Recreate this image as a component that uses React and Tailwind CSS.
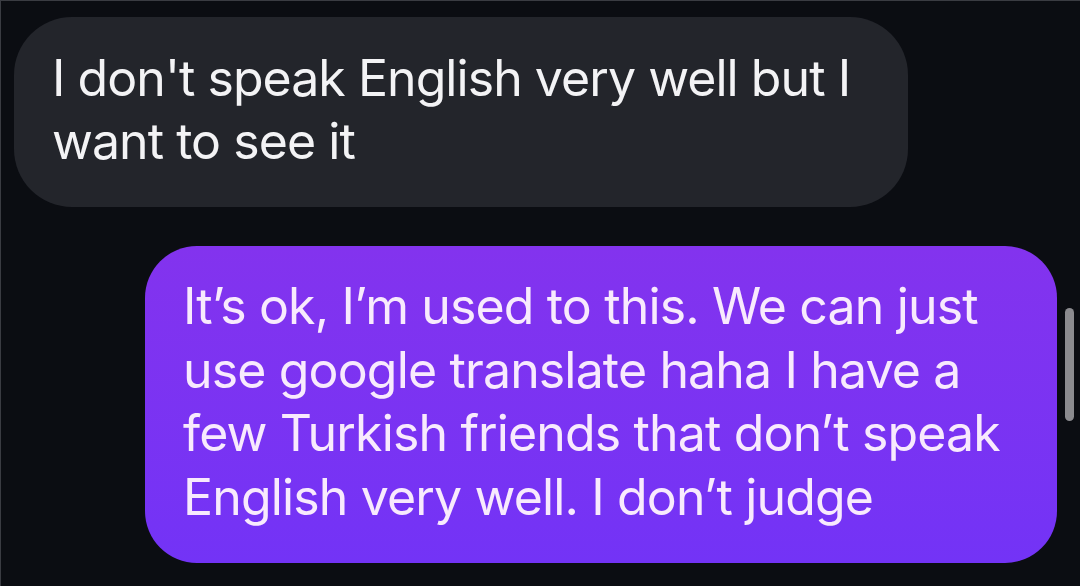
import React from 'react';

const font = { fontFamily: 'Inter, "Noto Sans", sans-serif' };

export default function App() {
  return (
    <div className="relative w-[1080px] h-[586px] overflow-hidden bg-[#0b0d12] border-t border-l border-[#3a3c42]" style={font}>
      <div className="flex flex-col pt-[16px]">
        {/* received */}
        <div className="ml-[13px] w-[894px] h-[190px] rounded-[58px] bg-[#23252b] pl-[38px] pt-[30px]">
          <p className="text-[50px] leading-[63px] text-[#f3f3f5] tracking-[-0.95px]">
            I don't speak English very well but I
            <br />
            want to see it
          </p>
        </div>

        {/* sent */}
        <div className="mt-[39px] ml-[144px] w-[912px] h-[317px] rounded-[52px] bg-gradient-to-b from-[#8333ee] to-[#7333f6] pl-[38px] pt-[29px]">
          <p className="text-[50px] leading-[63.5px] text-[#f8eafd] tracking-[-0.85px]">
            It’s ok, I’m used to this. We can just
            <br />
            use google translate haha I have a
            <br />
            few Turkish friends that don’t speak
            <br />
            English very well. I don’t judge
          </p>
        </div>
      </div>

      {/* scrollbar */}
      <div className="absolute left-[1064px] top-[307px] w-[9px] h-[113px] rounded-full bg-[#8b8b8f]" />
    </div>
  );
}
